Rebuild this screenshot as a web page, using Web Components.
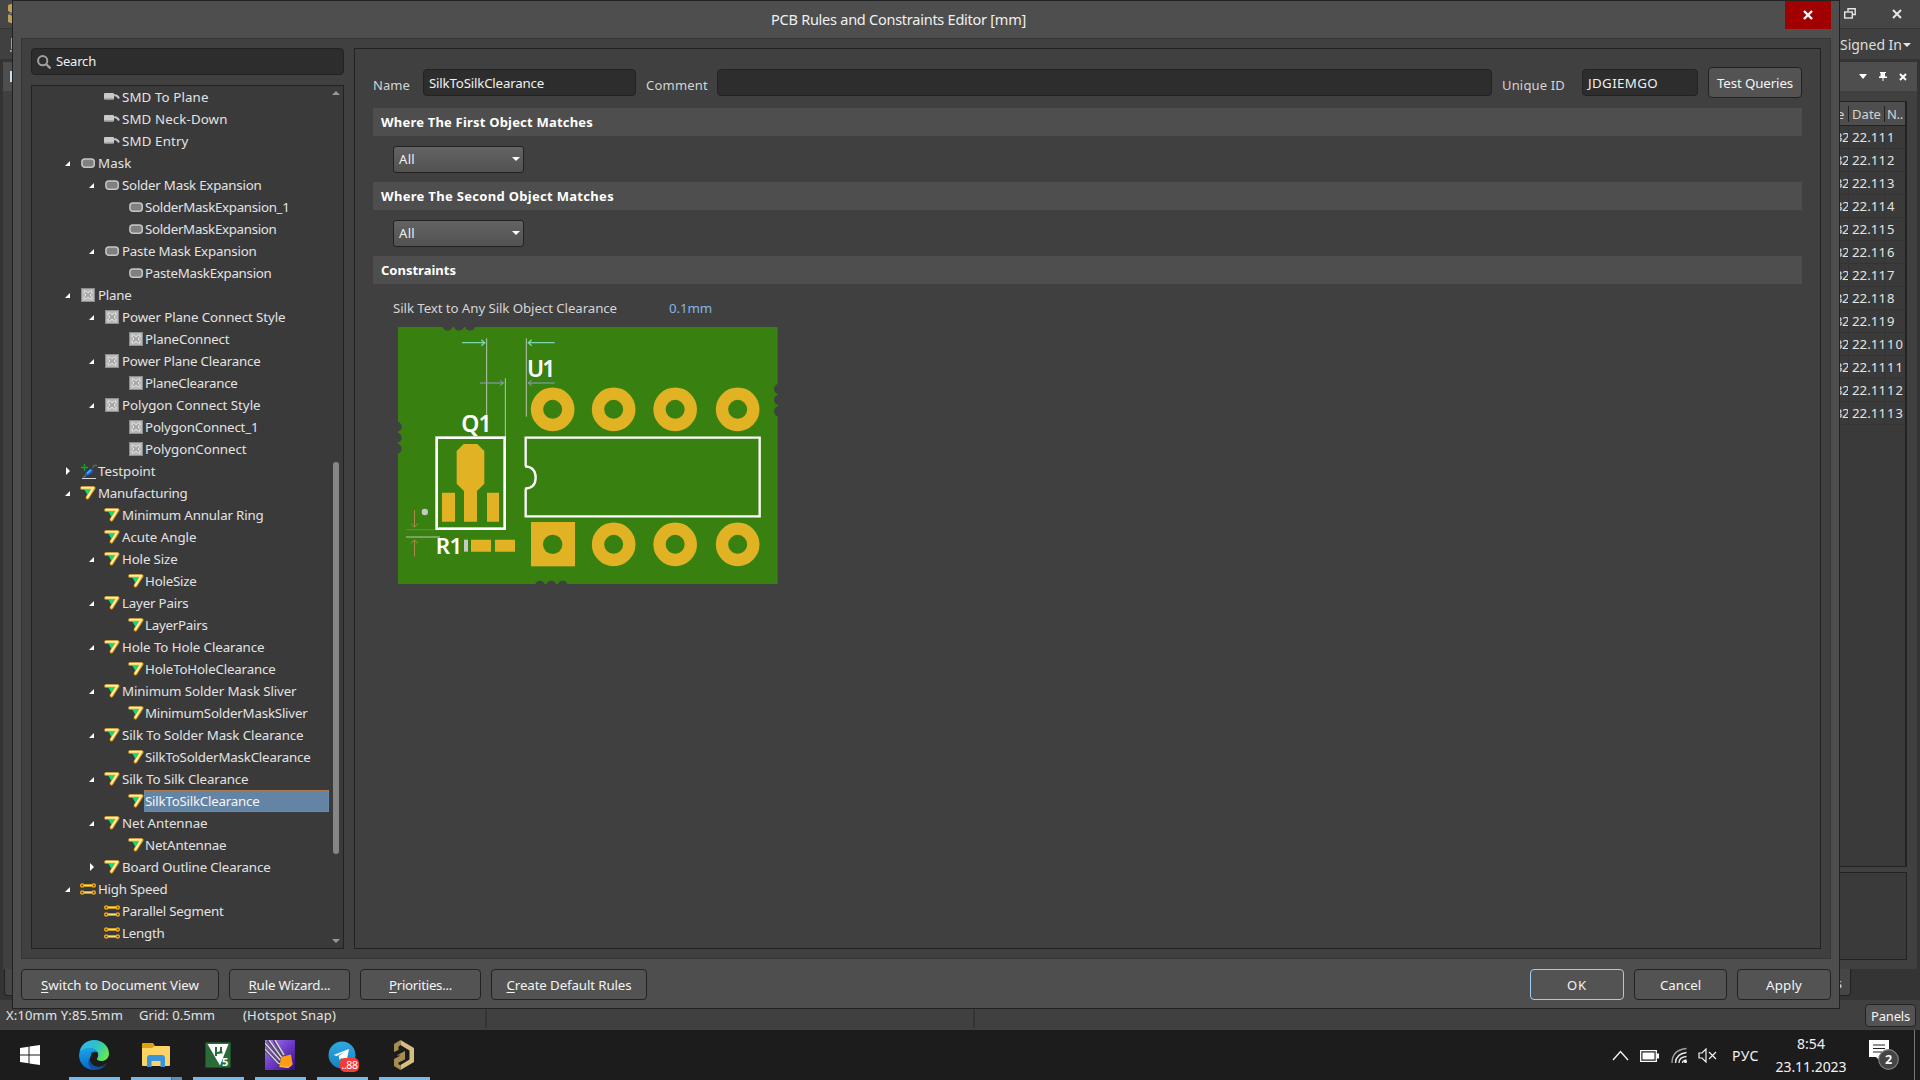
<!DOCTYPE html>
<html lang="en">
<head>
<meta charset="utf-8">
<title>PCB Rules and Constraints Editor</title>
<style>
html,body{margin:0;width:1920px;height:1080px;overflow:hidden;background:#404040}
body{font-family:"Noto Sans","Open Sans",sans-serif;font-size:13px;color:#e3e3e3}
</style>
</head>
<body>
<pcb-desktop></pcb-desktop>
<script>
const BASE = '*{box-sizing:border-box}:host{box-sizing:border-box}';
const ctx = document.createElement('canvas').getContext('2d');

function define(name, css, html, init) {
  const tpl = document.createElement('template');
  customElements.define(name, class extends HTMLElement {
    connectedCallback() {
      if (this.shadowRoot) return;
      const root = this.attachShadow({mode: 'open'});
      tpl.innerHTML = '<style>' + BASE + css + '</style>' + (typeof html === 'function' ? html(this) : html);
      root.appendChild(tpl.content.cloneNode(true));
      if (init) init(this, root);
    }
  });
}

/* Label whose tracking is adjusted so that it spans the width given in "w". */
define('fit-label',
  ':host{display:inline-block;white-space:nowrap;line-height:20px;flex:none}',
  '<slot></slot>',
  el => {
    const size = +(el.getAttribute('size') || 13), weight = el.getAttribute('weight') || 400;
    const text = el.textContent, w = +el.getAttribute('w');
    ctx.font = weight + ' ' + size + 'px "Noto Sans"';
    el.style.fontSize = size + 'px';
    el.style.fontWeight = weight;
    if (w) {
      const nat = ctx.measureText(text).width;
      el.style.letterSpacing = ((w + 1 - nat) / text.length).toFixed(3) + 'px';
      el.style.width = w + 1 + 'px';
    }
  });

const ICONS = {
  smd: '<svg width="16" height="14" viewBox="0 0 16 14"><path d="M10 5.500Q13 4.500 15 8.500" fill="none" stroke="#c4c4c4" stroke-width="2"/><rect x="0" y="3" width="10" height="6.500" rx="1" fill="#c9c9c9"/><path d="M.5 8.900h9" stroke="#989898" stroke-width="1.200"/></svg>',
  mask: '<svg width="14" height="14" viewBox="0 0 14 14"><rect x=".9" y="2.900" width="12.400" height="8.400" rx="3" fill="#808080" stroke="#c6c6c6" stroke-width="1.500"/></svg>',
  plane: '<svg width="14" height="14" viewBox="0 0 14 14"><rect width="14" height="14" fill="#b8b8b8"/><rect x=".5" y=".5" width="13" height="13" fill="none" stroke="#8e8e8e"/><path d="M3 3h2l1 1.500h2L9 3h2v2L9.500 6v2l1.500 1v2H9L8 9.500H6L5 11H3V9l1.500-1V6L3 5z" fill="#a8a8a8" stroke="#efefef" stroke-width="1" stroke-dasharray="1.600 .5"/></svg>',
  test: '<svg width="16" height="16" viewBox="0 0 16 16"><path d="M3.500 1v7M0 4.500h7" stroke="#12a431" stroke-width="1.300"/><path d="M1 15.500h14" stroke="#d8d8d8"/><path d="M2.500 14.500L5 12" stroke="#777" stroke-width="1.200"/><path d="M4 13q-.5-3 3-5.500l3-2 2 1.500q-.5 4-4.500 5z" fill="#1763d8"/><path d="M6 10.500L10 6.800" stroke="#59b4ff" stroke-width="1.500"/><path d="M11.500 5L13 2.500h3" stroke="#656565" stroke-width="1.300" fill="none"/></svg>',
  mfg: '<svg width="15" height="14" viewBox="0 0 15 14" overflow="visible"><path d="M3 3h7L6.500 9z" fill="#05df72"/><path d="M1 2h11.700L6.500 11.600" fill="none" stroke="#d99b20" stroke-width="3.700" stroke-linecap="round" stroke-linejoin="round"/><path d="M1 1.800h11.400L6.500 11.300" fill="none" stroke="#fff0a0" stroke-width="2.100" stroke-linecap="round" stroke-linejoin="round"/></svg>',
  speed: '<svg width="16" height="12" viewBox="0 0 16 12"><g stroke="#f5bd18" stroke-width="2.400"><path d="M2 2.500h12M2 9.500h12"/></g><g stroke="#fff0a0" stroke-width=".8"><path d="M4 2.400h8M4 9.400h8"/></g><g fill="#3a2a00" stroke="#f0a818" stroke-width="1.500"><circle cx="2.200" cy="2.500" r="1.500"/><circle cx="13.800" cy="2.500" r="1.500"/><circle cx="2.200" cy="9.500" r="1.500"/><circle cx="13.800" cy="9.500" r="1.500"/></g></svg>'
};

define('tree-row',
  ':host{display:flex;height:22px;align-items:center;color:#e3e3e3;padding-left:calc(var(--lv)*24px + 7px)}' +
  '.arrow{width:8px;flex:none;margin-right:9px;display:flex;justify-content:center;padding-left:1px}' +
  '.icon{width:17px;flex:none;display:flex}.icon.k2{width:16px}.icon svg{flex:none}' +
  '.mask svg,.plane svg,.mfg svg,.test svg{margin-left:1px}' +
  '.txt{flex:1;min-width:0;height:22px;display:flex;align-items:center;margin-right:14px;padding-left:1px;border:1px solid transparent;border-left-width:0}' +
  ':host([selected]) .txt{background:#6484a5;border:1px dotted #b08050;padding-left:0;color:#f5f5f5}',
  el => {
    const lv = +el.getAttribute('level'), st = el.getAttribute('state'), k = el.getAttribute('icon');
    el.style.setProperty('--lv', lv);
    const arrow = st === 'open' ? '<svg width="5" height="5"><path d="M5 0v5H0z" fill="#fff"/></svg>'
      : st === 'closed' ? '<svg width="4" height="8"><path d="M0 0l4 4-4 4z" fill="#fff"/></svg>' : '';
    return `<span class="arrow">${arrow}</span><span class="icon ${k} ${lv > 2 ? 'k2' : ''}">${ICONS[k]}</span><span class="txt"><fit-label size="13.3" w="${el.getAttribute('w') - .5}">${el.getAttribute('label')}</fit-label></span>`;
  });

define('push-button',
  ':host{display:flex;align-items:center;justify-content:center;height:31px;border:1px solid #222;border-radius:4px;background:#535353;color:#f4f4f4;flex:none}' +
  ':host([primary]){border:1px solid #9fccf5}',
  '<slot></slot>', el => { el.style.width = el.getAttribute('width') + 'px'; });

define('edit-box',
  ':host{display:flex;align-items:center;height:27px;border:1px solid #222;border-radius:4px;background:#2d2d2d;color:#f0f0f0;padding:0 0 1px 5px;flex:none}',
  '<slot></slot>', el => { el.style.width = el.getAttribute('width') + 'px'; });

define('combo-box',
  ':host{display:flex;align-items:center;justify-content:space-between;width:131px;height:27px;border:1px solid #222;border-radius:3px;background:linear-gradient(#636363,#525252);color:#f0f0f0;padding:0 3px 1px 5px}',
  '<slot></slot><svg width="8" height="4"><path d="M0 0h8L4 4z" fill="#fff"/></svg>');

define('section-bar',
  ':host{display:flex;align-items:center;height:28px;background:#4e4e4e;color:#fff;padding-left:8px}',
  '<slot></slot>');

define('pcb-preview',
  ':host{display:block;width:380px;height:257px}svg{display:block}text{font-family:"Noto Sans",sans-serif;font-weight:600;fill:#fff}',
  () => {
    const pad = (x, y) => `<circle cx="${x}" cy="${y}" r="47" fill="none" stroke="#e0b224" stroke-width="37"/>`;
    const dots = a => a.map(([x, y]) => `<circle cx="${x}" cy="${y}" r="15"/>`).join('');
    return `<svg width="379.500" height="257.200" viewBox="24 22 1138.500 771.500">
    <rect x="24" y="22" width="1139" height="772" fill="#388010"/>
    <g fill="#404040">${dots([[173,18],[207,18],[240,18],[450,798],[484,798],[518,798],[20,321],[20,354],[20,387],[1167,208],[1167,241],[1167,275]])}</g>
    <g stroke="#b9c7ae" stroke-width="3" fill="none"><path d="M290 56V300M346 176V352M409 56V291M48 652H150"/><path d="M48 630H136" stroke="#648c4c"/></g>
    <g fill="none" stroke="#78d8a8" stroke-width="4"><path d="M216 69H284M274 60l10 9-10 9M494 69H414M425 60l-10 9 10 9"/></g>
    <g fill="none" stroke="#8f9fc4" stroke-width="3"><path d="M270 190H341M330 182l10 8-10 8M494 190H414M425 182l-10 8 10 8"/></g>
    <g fill="none" stroke="#c48958" stroke-width="2.500"><path d="M73.500 571V622M63 612l10 10 11-10M73.500 711V661M63 671l10-10 11 10"/></g>
    ${[488,671,855.500,1043].map(x => pad(x, 269)).join('')}${[671,855.500,1043].map(x => pad(x, 674)).join('')}
    <rect x="423" y="607" width="132" height="133" fill="#e0b224"/><circle cx="488" cy="674" r="29" fill="#388010"/>
    <g fill="none" stroke="#fff"><rect x="140" y="354" width="204" height="273" stroke-width="8"/>
    <path d="M405 440H407V354H1109V590H407V507H405q32-2 32-33.500T405 440z" stroke-width="7"/></g>
    <g fill="#e0b224"><path d="M221 373h41l21 21v98l-22 22v92h-39v-92l-22-22v-98z"/><path d="M156 519h39v87h-39zM291 519h36v87h-36zM243 660h60v36h-60zM315 660h60v36h-60z"/></g>
    <rect x="222" y="660" width="12" height="36" fill="#c8c8c8"/><circle cx="104.500" cy="577" r="9.500" fill="#c8c8c8"/>
    <text x="411" y="171" font-size="69" textLength="85">U1</text><text x="214" y="336" font-size="69" textLength="91">Q1</text><text x="137" y="702" font-size="67" textLength="80">R1</text></svg>`;
  });

const TREE = [
  [2,'smd','','SMD To Plane',86],[2,'smd','','SMD Neck-Down',105],[2,'smd','','SMD Entry',66],
  [1,'mask','open','Mask',33],[2,'mask','open','Solder Mask Expansion',139],[3,'mask','','SolderMaskExpansion_1',144],[3,'mask','','SolderMaskExpansion',131],
  [2,'mask','open','Paste Mask Expansion',134],[3,'mask','','PasteMaskExpansion',126],
  [1,'plane','open','Plane',33],[2,'plane','open','Power Plane Connect Style',163],[3,'plane','','PlaneConnect',84],[2,'plane','open','Power Plane Clearance',138],[3,'plane','','PlaneClearance',92],
  [2,'plane','open','Polygon Connect Style',138],[3,'plane','','PolygonConnect_1',113],[3,'plane','','PolygonConnect',101],
  [1,'test','closed','Testpoint',57],[1,'mfg','open','Manufacturing',89],[2,'mfg','','Minimum Annular Ring',141],[2,'mfg','','Acute Angle',74],
  [2,'mfg','open','Hole Size',55],[3,'mfg','','HoleSize',51],[2,'mfg','open','Layer Pairs',66],[3,'mfg','','LayerPairs',62],
  [2,'mfg','open','Hole To Hole Clearance',142],[3,'mfg','','HoleToHoleClearance',130],[2,'mfg','open','Minimum Solder Mask Sliver',174],[3,'mfg','','MinimumSolderMaskSliver',162],
  [2,'mfg','open','Silk To Solder Mask Clearance',181],[3,'mfg','','SilkToSolderMaskClearance',165],[2,'mfg','open','Silk To Silk Clearance',126],[3,'mfg','','SilkToSilkClearance',114,1],
  [2,'mfg','open','Net Antennae',85],[3,'mfg','','NetAntennae',81],[2,'mfg','closed','Board Outline Clearance',148],
  [1,'speed','open','High Speed',69],[2,'speed','','Parallel Segment',101],[2,'speed','','Length',42]
];

define('rules-tree',
  ':host{display:flex;width:313px;height:864px;border:1px solid #222;background:#3a3a3a;overflow:hidden}' +
  '.rows{flex:none;width:311px}.bar{width:14px;flex:none;display:flex;flex-direction:column;align-items:center;padding:5px 1px 5px 0;margin-left:-14px}' +
  '.bar svg{flex:none}.thumb{width:6px;height:392px;flex:none;border-radius:3px;background:#868686;margin-top:367px;margin-bottom:auto}',
  '<div class="rows">' + TREE.map(([l, i, s, t, w, sel]) => `<tree-row level="${l}" icon="${i}" state="${s}" label="${t}" w="${w}"${sel ? ' selected' : ''}></tree-row>`).join('') +
  '</div><div class="bar"><svg width="8" height="4"><path d="M0 4l4-4 4 4z" fill="#989898"/></svg><div class="thumb"></div><svg width="8" height="4"><path d="M0 0h8L4 4z" fill="#989898"/></svg></div>');

define('rule-form',
  ':host{display:flex;flex-direction:column;width:1467px;border:1px solid #222;padding:18px 18px 0}' +
  '.top{display:flex;height:31px;align-items:center;color:#d4d4d4}.top>fit-label{padding-top:4px}.top edit-box{padding-bottom:0}' +
  '.box{padding:10px 0 9px 20px}section-bar.first{margin-top:10px}' +
  '.kv{display:flex;align-items:center;height:20px;margin:14px 0 0 20px;color:#d4d4d4}.val{color:#84b6e4;margin:-1px 0 0 52px}' +
  'pcb-preview{margin:9px 0 0 25px}',
  `<div class="top"><fit-label w="36">Name</fit-label>
    <edit-box width="213" style="margin-left:13px"><fit-label w="114" size="13.3">SilkToSilkClearance</fit-label></edit-box>
    <fit-label w="61" style="margin-left:10px">Comment</fit-label>
    <edit-box width="775" style="margin-left:9px"></edit-box>
    <fit-label w="62" style="margin-left:10px">Unique ID</fit-label>
    <edit-box width="116" style="margin-left:17px"><fit-label w="69" size="13.3">JDGIEMGO</fit-label></edit-box>
    <push-button width="94" style="margin-left:10px"><fit-label w="75" size="13.3">Test Queries</fit-label></push-button></div>
  <section-bar class="first"><fit-label w="211" weight="700">Where The First Object Matches</fit-label></section-bar>
  <div class="box"><combo-box><fit-label w="15">All</fit-label></combo-box></div>
  <section-bar><fit-label w="232" weight="700">Where The Second Object Matches</fit-label></section-bar>
  <div class="box"><combo-box><fit-label w="15">All</fit-label></combo-box></div>
  <section-bar><fit-label w="74" weight="700">Constraints</fit-label></section-bar>
  <div class="kv"><fit-label w="223" size="13.3">Silk Text to Any Silk Object Clearance</fit-label><fit-label class="val" w="42" size="13.3">0.1mm</fit-label></div>
  <pcb-preview></pcb-preview>`);

define('rules-dialog',
  ':host{display:flex;flex-direction:column;width:1828px;height:1009px;border:1px solid #222;background:#4e4e4e;padding:0 8px}' +
  'header{height:37px;display:flex;justify-content:space-between;color:#f0f0f0;padding-left:750px}header fit-label{margin-top:8px}' +
  '.close{width:46px;height:28px;background:#a00000;display:flex;align-items:center;justify-content:center}' +
  '.main{height:921px;border:1px solid #363636;background:#404040;display:flex;gap:10px;padding:9px}' +
  '.left{display:flex;flex-direction:column;gap:10px}edit-box svg{margin:1px 5px 0 0}' +
  'footer{display:flex;gap:10px;padding-top:10px}.sp{flex:1}u{text-underline-offset:2px}',
  `<header><fit-label w="254" size="14.5">PCB Rules and Constraints Editor [mm]</fit-label>
    <div class="close"><svg width="10" height="10"><path d="M1 1l8 8M9 1l-8 8" stroke="#fff" stroke-width="2.400"/></svg></div></header>
  <div class="main"><div class="left">
    <edit-box width="313"><svg width="14" height="14"><circle cx="5.700" cy="5.700" r="4.600" fill="none" stroke="#a0a0a0" stroke-width="2"/><path d="M9 9l4.500 4.500" stroke="#a0a0a0" stroke-width="2.300"/></svg><fit-label w="39">Search</fit-label></edit-box>
    <rules-tree></rules-tree></div><rule-form></rule-form></div>
  <footer><push-button width="198"><fit-label w="157" size="13.3"><u>S</u>witch to Document View</fit-label></push-button>
    <push-button width="121"><fit-label w="81" size="13.3"><u>R</u>ule Wizard...</fit-label></push-button>
    <push-button width="121"><fit-label w="62" size="13.3"><u>P</u>riorities...</fit-label></push-button>
    <push-button width="156"><fit-label w="124" size="13.3"><u>C</u>reate Default Rules</fit-label></push-button><span class="sp"></span>
    <push-button width="94" primary><fit-label w="19">OK</fit-label></push-button>
    <push-button width="93"><fit-label w="40" size="13.3">Cancel</fit-label></push-button>
    <push-button width="94"><fit-label w="35" size="13.3">Apply</fit-label></push-button></footer>`);

define('history-panel',
  ':host{display:flex;flex-direction:column;width:120px;height:907px;background:#404040;color:#dcdcdc}' +
  '.head{height:29px;background:#4e4e4e;display:flex;justify-content:flex-end;align-items:center;gap:12px;padding-right:10px}' +
  '.grid{margin:10px 10px 0 0;height:766px;border:1px solid #222;border-right-width:2px;background:#3a3a3a}' +
  '.r{display:flex;justify-content:flex-end;height:23px;border-bottom:1px solid #343434;align-items:center;color:#e3e3e3}' +
  '.r.h{height:24px;background:#4e4e4e;border-bottom:1px solid #222;color:#d4d4d4}' +
  '.c{overflow:hidden;height:22px;display:flex;align-items:center;border-right:1px solid #343434;padding-left:2px}' +
  '.c.b{padding-left:3px}.h .c{border-color:#222;height:16px}.a{width:14px}.b{width:36px}.d{width:20px}.d{border:0}' +
  '.note{margin:5px 10px 0 0;height:88px;border:1px solid #222;background:#3a3a3a}',
  `<div class="head"><svg width="8" height="5"><path d="M0 0h8L4 5z" fill="#fff"/></svg><svg width="8" height="9" viewBox="0 0 8 9"><path d="M1 0h6v1H6v3.500h2V6H4.500v3h-1V6H0V4.500h1.500V1H1z" fill="#fff"/></svg><svg width="8" height="8"><path d="M1 1l6 6M7 1L1 7" stroke="#fff" stroke-width="2"/></svg></div>
  <div class="grid"><div class="r h"><span class="c a">e</span><span class="c b"><fit-label w="28">Date</fit-label></span><span class="c d"><fit-label w="15">N..</fit-label></span></div>` +
  Array.from({length: 13}, (_, i) => `<div class="r"><span class="c a"><fit-label w="13" style="margin-left:-2px">32</fit-label></span><span class="c b"><fit-label w="33" size="13.3">22.11</fit-label></span><span class="c d"><fit-label w="${i < 9 ? 8 : 16}">${i + 1}</fit-label></span></div>`).join('') +
  '</div><div class="note"></div>');

define('editor-shell',
  ':host{display:flex;flex-direction:column;height:1030px;background:#343434}' +
  '.title{height:29px;background:#464646;border-bottom:1px solid #343434;display:flex;justify-content:space-between;align-items:center;padding:0 18px 1px 7px}' +
  '.title div{display:flex;gap:36px;align-items:center}.menu{height:30px;background:#404040;display:flex;justify-content:space-between;align-items:center;padding:1px 9px 0 10px;color:#dedede}' +
  '.menu div{display:flex;align-items:center;gap:1px}' +
  '.body{display:flex;justify-content:space-between;height:907px;margin:3px 3px 0 3px}.lp{width:60px;background:#404040}.lp i{display:block;height:29px;background:#4e4e4e}.lp b{display:block;width:2px;height:11px;background:#c7dced;margin:-20px 0 0 7px}' +
  '.tabs{height:31px;display:flex;justify-content:space-between;padding:0 69px 0 4px}.tabs span{height:27px;width:80px;background:#464646;border:1px solid #222;border-top:0;border-radius:0 0 4px 4px;text-align:right;padding:4px 8px 0 0;line-height:20px}' +
  '.status{height:30px;background:#404040;display:flex;align-items:center;padding:0 4px 0 6px}.status i{width:2px;height:28px;background:#343434;margin-bottom:2px}' +
  'push-button{height:23px;margin-left:auto;margin-top:1px}',
  `<div class="title"><svg width="8" height="22"><path d="M1 2l6-2v8l-5 3 5 3v7l-6-2v-7l4-2-4-2z" fill="#bf9d5a"/></svg><div><svg width="12" height="11"><path d="M4 3V.8h7.200V6.500H9" fill="none" stroke="#e6e6e6" stroke-width="1.400"/><rect x=".7" y="4" width="7.600" height="6" fill="none" stroke="#e6e6e6" stroke-width="1.400"/></svg><svg width="10" height="10"><path d="M1 1l8 8M9 1L1 9" stroke="#e6e6e6" stroke-width="2"/></svg></div></div>
  <div class="menu"><svg width="8" height="14"><path d="M1.500 0v11" stroke="#7aa8d0"/><path d="M0 13h8" stroke="#eee"/></svg><div><fit-label w="61" size="14">Signed In</fit-label><svg width="8" height="4"><path d="M0 0h8L4 4z" fill="#e6e6e6"/></svg></div></div>
  <div class="body"><div class="lp"><i></i><b></b></div><history-panel></history-panel></div>
  <div class="tabs"><span></span><span>s</span></div>
  <div class="status"><fit-label w="116">X:10mm Y:85.5mm</fit-label><fit-label w="75" style="margin-left:16px">Grid: 0.5mm</fit-label><fit-label w="92" style="margin-left:28px">(Hotspot Snap)</fit-label><i style="margin-left:149px"></i><i style="margin-left:486px"></i>
  <push-button width="51"><fit-label w="38">Panels</fit-label></push-button></div>`);

define('task-button',
  ':host{display:flex;flex-direction:column;width:51px;height:50px;align-items:center;justify-content:space-between;flex:none;position:relative}' +
  '.i{height:47px;display:flex;align-items:center;padding:3px 1px 0 0}.u{height:3px;width:51px;background:#76b9ed}:host([multi]) .u{background:linear-gradient(90deg,#76b9ed 40px,#47708f 40px,#47708f 41px,#5b8fbb 41px)}::slotted(svg){display:block}',
  '<div class="i"><slot></slot></div><div class="u"></div>');

define('task-bar',
  ':host{display:flex;height:50px;background:#1c1c1c;color:#f2f2f2}' +
  '.start{width:60px;display:flex;align-items:center;justify-content:center;margin-right:9px}.apps{display:flex;gap:11px}' +
  '.tray{margin-left:auto;display:flex;align-items:center}.clock{display:flex;flex-direction:column;align-items:center;width:72px;gap:3px;margin-left:16px}' +
  '.note{margin-left:22px;width:30px;height:30px}.end{width:6px;height:50px;border-left:1px solid #777;margin-left:15px}' +
  '.badge{position:absolute;left:23px;top:28px;width:19px;height:14px;border-radius:5px;background:#f23c34;display:flex;justify-content:center;align-items:center;color:#fff}',
  `<div class="start"><svg width="20" height="20"><path d="M0 3l8.500-1.200v7.700H0zM9.500 1.600L20 0v9.500H9.500zM0 10.500h8.500v7.700L0 17zM9.500 10.500H20V20L9.500 18.400z" fill="#fff"/></svg></div>
  <div class="apps">
  <task-button><svg width="30" height="30" viewBox="0 0 30 30"><defs><linearGradient id="ea" x1="0" x2="1" y1=".2" y2=".6"><stop offset="0" stop-color="#2fb4ee"/><stop offset=".55" stop-color="#2ec4c6"/><stop offset="1" stop-color="#66e650"/></linearGradient><linearGradient id="eb" x1=".3" x2=".4" y1="0" y2="1"><stop offset="0" stop-color="#1ba4e8"/><stop offset="1" stop-color="#0868c8"/></linearGradient></defs>
    <path d="M.3 13C1.500 5 7.500 0 15 0c9 0 15 6.500 15 13.500 0 5-4 7.500-7.500 7.500-4 0-5.500-1.500-4-3.500C20 15 19 9.500 12.500 8.500 7 8 2 10 .3 13z" fill="url(#ea)"/>
    <path d="M0 15C.5 10 6 7.500 11.500 8c3.500.300 6 2.300 7.300 4.500-4.500-.5-8 2.500-8 7 0 5 4 9 8.200 9.800C9 32 0 25 0 15z" fill="url(#eb)"/>
    <path d="M11 18c-1 6 5 9.500 10.500 8.500 2.500-.5 5-2 6.500-3.500-2 4-6.500 7-12 7-6-1-8.500-8-5-12z" fill="#10509c"/><path d="M12 13c2.500-2 5.500-1.500 6.800-.5.800 2.500.3 4-.6 5.300-1.200 2 .8 3.200 3.300 3.300-5 .500-9-1.500-9.500-8.100z" fill="#1c1c1c" opacity=".85"/></svg></task-button>
  <task-button multi><svg width="28" height="24" viewBox="0 0 28 24"><path d="M0 1q0-1 1-1h10l2 3v4H0z" fill="#e0a10c"/><path d="M0 5h10l3-2h14q1 0 1 1v18q0 1-1 1H1q-1 0-1-1z" fill="#fbd468"/><path d="M5 24v-9q0-3 3-3h12q3 0 3 3v9h-4.500v-6H9.500v6z" fill="#3a94dc"/></svg></task-button>
  <task-button><svg width="26" height="26" viewBox="0 0 26 26"><rect width="26" height="26" rx="2" fill="#2a6b38"/><rect x=".5" y=".5" width="25" height="25" rx="2" fill="none" stroke="#1d4c28"/><path d="M2.500 2h21L15 23.500z" fill="#fff"/><path d="M11 14V5M11 9.500q0 1.500 2 1.500t3-2M16 5v5.500h1.500" stroke="#2a6b38" stroke-width="2" fill="none"/><text x="17" y="23.500" font-size="11" font-weight="700" fill="#fff" font-family="Noto Sans">5</text></svg></task-button>
  <task-button><svg width="30" height="30" viewBox="0 0 30 30"><defs><linearGradient id="pv" x1="0" x2="1" y1="0" y2="1"><stop offset="0" stop-color="#a67cf0"/><stop offset=".5" stop-color="#6c3cc8"/><stop offset="1" stop-color="#350b7d"/></linearGradient></defs><rect width="30" height="30" fill="url(#pv)"/><path d="M0 9l13 14q3 2 5-1M0 3l15 17M3 0l14 18M9 0l10 16" stroke="#4e405e" stroke-width="3" fill="none"/><path d="M0 9l13 14q3 2 5-1M0 3l15 17M4 0l13 18M10 0l9 15" stroke="#d6d1de" stroke-width="1.500" fill="none"/><path d="M16 17l10-2.500 1.500 9.500-4 3.500-9-1z" fill="#ff9d13"/><path d="M14.500 26.500l9 1 4-3.500" stroke="#ffd06a" fill="none"/></svg></task-button>
  <task-button><svg width="28" height="28" viewBox="0 0 28 28"><defs><linearGradient id="tg" x1="0" x2="0" y1="0" y2="1"><stop offset="0" stop-color="#32a8df"/><stop offset="1" stop-color="#1482c4"/></linearGradient></defs><circle cx="14" cy="14" r="13.500" fill="url(#tg)"/><path d="M5.500 14L21 8l-2.500 12.500-5-3.500-2 2-.8-4 6.300-4.500-8 4.500z" fill="#fff"/></svg><div class="badge"><fit-label w="15" size="10.500">..88</fit-label></div></task-button>
  <task-button><svg width="20" height="30" viewBox="0 0 20 30"><g fill="#a88d50"><path d="M0 4L6.500 0v5L4.500 6.500V10L0 12z"/><path d="M6.500 0L20 8v14L6.500 30v-5l9-5.500v-9L6.500 5z" fill="#d8bd80"/><path d="M11 11v8.500l-6.500 3v2l2 .5v5L0 26v-7l6.500-3.500H2.500z"/></g></svg></task-button></div>
  <div class="tray"><svg width="17" height="11"><path d="M1 10l7.500-8.500L16 10" fill="none" stroke="#f2f2f2" stroke-width="1.400"/></svg>
  <svg width="19" height="12" style="margin-left:11px;margin-top:1px"><path d="M.7.700h15.600v10.600H.7z" fill="none" stroke="#fff" stroke-width="1.300"/><path d="M2.500 2.500h12v7h-12zM17 3.500h2v5h-2z" fill="#fff"/></svg>
  <svg width="17" height="17" viewBox="0 0 17 17" style="margin-left:12px"><g fill="none" stroke="#e8e8e8" stroke-width="1.300"><path d="M1 16Q1 3 15.500 1.500" stroke="#a0a0a0"/><path d="M4.500 16Q4.500 7 15.500 5.500M8 16q0-6 7.500-6.500M11.500 16q0-2.500 4-3"/></g><circle cx="14.500" cy="14.500" r="1.500" fill="#fff"/></svg>
  <svg width="19" height="15" style="margin-left:10px"><path d="M1 5h3l4-4v13l-4-4H1z" fill="none" stroke="#f2f2f2" stroke-width="1.200"/><path d="M11 4l7 7M18 4l-7 7" stroke="#f2f2f2" stroke-width="1.200"/></svg>
  <fit-label w="26" size="14" style="margin-left:15px;margin-top:2px">РУС</fit-label>
  <div class="clock"><fit-label w="27" size="14">8:54</fit-label><fit-label w="70" size="14">23.11.2023</fit-label></div>
  <svg class="note" viewBox="0 0 30 30"><path d="M0 0h20v17h-9v4l-4-4H0z" fill="#fff"/><path d="M4 5h12M4 8.500h12M4 12h9" stroke="#222" stroke-width="1.200"/><circle cx="19.500" cy="19.500" r="9.800" fill="#454545" stroke="#808080" stroke-width="1.200"/><text x="19.500" y="24" text-anchor="middle" font-size="12.500" font-weight="700" fill="#fff" font-family="Noto Sans">2</text></svg>
  <div class="end"></div></div>`);

define('pcb-desktop',
  ':host{display:block;position:relative;width:1920px;height:1080px}rules-dialog{position:absolute;left:12px;top:0}',
  '<editor-shell></editor-shell><task-bar></task-bar><rules-dialog></rules-dialog>');
</script>
</body>
</html>
